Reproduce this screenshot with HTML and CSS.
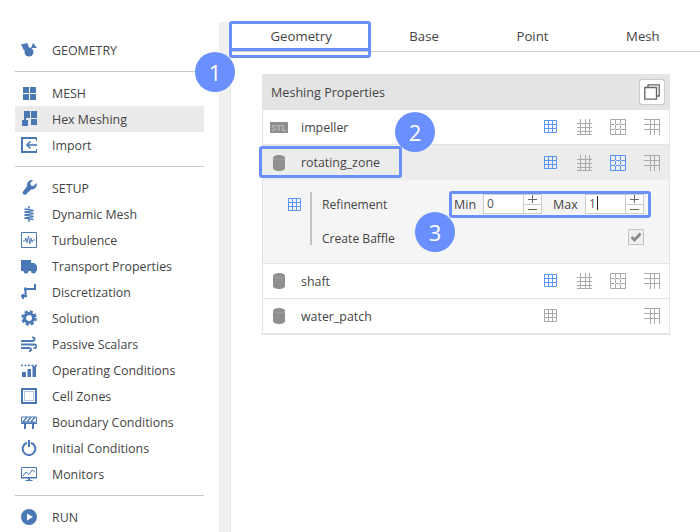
FILE: index.html
```html
<!DOCTYPE html>
<html lang="en">
<head>
  <meta charset="UTF-8">
  <title>Hex Meshing</title>
  <link rel="stylesheet" href="styles.css">
</head>
<body>
  <svg class="sprite" xmlns="http://www.w3.org/2000/svg">
    <symbol id="grid-a" viewBox="0 0 16 16"><path d="M2.5 1.5h12v12h-12zM2 5.5h13M2 9.5h13M6.5 1v13M10.5 1v13" fill="none" stroke="currentColor"/></symbol>
    <symbol id="grid-b" viewBox="0 0 16 16"><path d="M4.5 0v16M9.5 0v16M13.5 0v16M1 4.5h15M1 8.5h15M1 12.5h15M1 15.5h15" fill="none" stroke="currentColor"/></symbol>
    <symbol id="grid-c" viewBox="0 0 16 16"><path d="M.5.5h15v15H.5z" fill="none" stroke="currentColor"/><path d="M1 5.5h14M1 10.5h14M5.5 1v14M10.5 1v14" fill="none" stroke="currentColor" stroke-dasharray="4 1"/></symbol>
    <symbol id="grid-d" viewBox="0 0 16 16"><path d="M0 .5h16M0 5.5h16M0 10.5h16M15.5 0v16M10.5 0v16M6.5 0v16" fill="none" stroke="currentColor"/></symbol>
    <symbol id="cylinder" viewBox="0 0 12 16"><path d="M0 3c0-4 12-4 12 0v10c0 4-12 4-12 0z" fill="#8f8f8f"/><path d="M0 3.2c2 2.4 10 2.4 12 0" fill="none" stroke="#a5a5a5"/></symbol>
    <symbol id="plus" viewBox="0 0 9 8"><path d="M0 4.500h9M4.500 0v8" fill="none" stroke="currentColor"/></symbol>
    <symbol id="minus" viewBox="0 0 9 8"><path d="M0 4.500h9" fill="none" stroke="currentColor"/></symbol>
  </svg>

  <div class="page">
    <nav class="sidebar">
      <a class="nav-item">
        <svg class="nav-icon" viewBox="0 0 16 16"><path d="M0 2.500L6.500 1 8 6 3 8.500z"/><circle cx="8" cy="10" r="4.500"/><path d="M12 1l4 5h-6z"/></svg>
        GEOMETRY
      </a>
      <hr>
      <a class="nav-item">
        <svg class="nav-icon" viewBox="0 0 16 16"><path d="M2 2h6v6H2zM9 2h6v6H9zM2 9h6v6H2zM9 9h6v6H9z"/></svg>
        MESH
      </a>
      <a class="nav-item active">
        <svg class="nav-icon" viewBox="0 0 16 16"><path d="M3 0h6v7H5v2H3zM10 0h6v7h-6zM10 8h6v6h-6zM1 9h6v6H1z"/></svg>
        Hex Meshing
      </a>
      <a class="nav-item">
        <svg class="nav-icon" viewBox="0 0 16 16"><path d="M16 4V1H1v14h15v-3" fill="none" stroke-width="2"/><path d="M16 8H7" fill="none" stroke-width="1.600"/><path d="M9.500 4.500L6 8l3.500 3.500" fill="none" stroke-width="1.600"/></svg>
        Import
      </a>
      <hr>
      <a class="nav-item">
        <svg class="nav-icon" viewBox="0 0 16 16"><path d="M15.500 3l-3 3-2.500-.500-.800-2.500 3-3a5 5 0 0 0-6 6L2 11.500A2.200 2.200 0 0 0 5 14.500l5-5a5 5 0 0 0 5.500-6.500z"/></svg>
        SETUP
      </a>
      <a class="nav-item">
        <svg class="nav-icon" viewBox="0 0 16 16"><path d="M8 0v2.500M3.500 3l9 1.500L3.500 6l9 1.500L3.500 9l9 1.500L3.500 12l9 1.500M8 13.500V16" fill="none" stroke-width="1.500"/></svg>
        Dynamic Mesh
      </a>
      <a class="nav-item">
        <svg class="nav-icon" viewBox="0 0 16 16"><path d="M.5.5h15v15H.5z" fill="none"/><path d="M2 9h2l1-3 1 5 1.500-7L9 12l1-6 1 4 1-2h2" fill="none" stroke-width=".9"/></svg>
        Turbulence
      </a>
      <a class="nav-item">
        <svg class="nav-icon" viewBox="0 0 16 16"><path d="M0 2h10v3h3.500L16 8v5H0z"/><circle class="wheel" cx="5" cy="13" r="2.500"/><circle class="wheel" cx="12.500" cy="13" r="2.500"/></svg>
        Transport Properties
      </a>
      <a class="nav-item">
        <svg class="nav-icon" viewBox="0 0 16 16"><path d="M0 12h4.500V5H14" fill="none" stroke-width="2"/><path d="M13 0h2v6h-2zM1 10h2v5H1z"/><circle cx="4.500" cy="5" r="1.700"/><circle cx="4.500" cy="12" r="1.500"/></svg>
        Discretization
      </a>
      <a class="nav-item">
        <svg class="nav-icon" viewBox="0 0 16 16"><circle cx="8" cy="8" r="4.500" fill="none" stroke-width="3"/><circle cx="8" cy="8" r="6.500" fill="none" stroke-width="2.500" stroke-dasharray="3 2.100"/></svg>
        Solution
      </a>
      <a class="nav-item">
        <svg class="nav-icon" viewBox="0 0 16 16"><path d="M0 5h11c3.500 0 3.500-4 0-3.500M0 8.500h13c3.500 0 3.500 4-.5 3.500M0 12h8c3 0 2.500 3.500 0 3" fill="none" stroke-width="1.800"/></svg>
        Passive Scalars
      </a>
      <a class="nav-item">
        <svg class="nav-icon" viewBox="0 0 16 16"><path d="M1 10h4v5H1zM6.500 7h3.500v8H6.500zM11.500 4H15v11h-3.500z"/><path d="M0 3.500h16" fill="none" stroke-width="1.500" stroke-dasharray="2 1.500"/></svg>
        Operating Conditions
      </a>
      <a class="nav-item">
        <svg class="nav-icon" viewBox="0 0 16 16"><path d="M1 1h14v14H1z" fill="none" stroke-width="2"/><path d="M3.500 3.500h9v9h-9z" fill="none" stroke-width=".8" stroke-dasharray="1 1"/></svg>
        Cell Zones
      </a>
      <a class="nav-item">
        <svg class="nav-icon" viewBox="0 0 16 16"><path d="M.500 3h15v5H.500z" fill="none"/><path d="M2 8l4-5M6 8l4-5M10 8l4-5" fill="none" stroke-width="1.300"/><path d="M3 8h2v7H3zM11 8h2v7h-2z"/><path d="M0 8.500h16v1.500H0z"/></svg>
        Boundary Conditions
      </a>
      <a class="nav-item">
        <svg class="nav-icon" viewBox="0 0 16 16"><path d="M6 2.800a6.300 6.300 0 1 0 4 0" fill="none" stroke-width="2"/><path d="M7 0h2v7H7z"/></svg>
        Initial Conditions
      </a>
      <a class="nav-item">
        <svg class="nav-icon" viewBox="0 0 16 16"><path d="M.5 1.500h15v10H.5z" fill="none"/><path d="M2 10l3-4 3 2.500L11 4l3 2" fill="none" stroke-width="1"/><path d="M0 11h16v1.500H0zM7 12h2v2H7zM4.500 14h7v1h-7z"/></svg>
        Monitors
      </a>
      <hr>
      <a class="nav-item">
        <svg class="nav-icon" viewBox="0 0 16 16"><path fill-rule="evenodd" d="M8 0a8 8 0 1 1 0 16A8 8 0 0 1 8 0zM6 4.500v7L12 8z"/></svg>
        RUN
      </a>
    </nav>

    <div class="strip"></div>

    <main class="content">
      <div class="tabs">
        <a class="tab active">Geometry</a>
        <a class="tab">Base</a>
        <a class="tab">Point</a>
        <a class="tab">Mesh</a>
      </div>

      <section class="panel">
        <header class="panel-head">
          <span>Meshing Properties</span>
          <button class="copy-btn" type="button">
            <svg width="16" height="16" viewBox="0 0 16 16"><path d="M4 3.500V.8h11.200V12h-2.700M.8 3.500h11.700V15.200H.8z" fill="none" stroke="#666" stroke-width="1.300"/></svg>
          </button>
        </header>

        <div class="row">
          <span class="row-type"><span class="stl">STL</span></span>
          <span class="row-name">impeller</span>
          <span class="cell"><svg class="on"><use href="#grid-a"/></svg></span>
          <span class="cell"><svg><use href="#grid-b"/></svg></span>
          <span class="cell"><svg><use href="#grid-c"/></svg></span>
          <span class="cell"><svg><use href="#grid-d"/></svg></span>
        </div>

        <div class="row open">
          <span class="row-type"><svg class="cyl"><use href="#cylinder"/></svg></span>
          <span class="row-name">rotating_zone</span>
          <span class="cell"><svg class="on"><use href="#grid-a"/></svg></span>
          <span class="cell"><svg><use href="#grid-b"/></svg></span>
          <span class="cell"><svg class="on"><use href="#grid-c"/></svg></span>
          <span class="cell"><svg><use href="#grid-d"/></svg></span>
        </div>

        <div class="detail">
          <svg class="detail-icon on"><use href="#grid-a"/></svg>
          <div class="detail-rows">
            <div class="detail-row">
              <span class="detail-label">Refinement</span>
              <span class="range-label min-label">Min</span>
              <span class="spin">
                <span class="spin-value">0</span>
                <span class="spin-btns">
                  <span class="spin-btn"><svg><use href="#plus"/></svg></span>
                  <span class="spin-btn"><svg><use href="#minus"/></svg></span>
                </span>
              </span>
              <span class="range-label max-label">Max</span>
              <span class="spin">
                <span class="spin-value">1<b class="caret"></b></span>
                <span class="spin-btns">
                  <span class="spin-btn"><svg><use href="#plus"/></svg></span>
                  <span class="spin-btn"><svg><use href="#minus"/></svg></span>
                </span>
              </span>
            </div>
            <div class="detail-row">
              <span class="detail-label">Create Baffle</span>
              <span class="check">
                <svg width="12" height="10" viewBox="0 0 12 10"><path d="M1.500 5l3 3 6-6.500" fill="none" stroke="#8a8a8a" stroke-width="2.600"/></svg>
              </span>
            </div>
          </div>
        </div>

        <div class="row">
          <span class="row-type"><svg class="cyl"><use href="#cylinder"/></svg></span>
          <span class="row-name">shaft</span>
          <span class="cell"><svg class="on"><use href="#grid-a"/></svg></span>
          <span class="cell"><svg><use href="#grid-b"/></svg></span>
          <span class="cell"><svg><use href="#grid-c"/></svg></span>
          <span class="cell"><svg><use href="#grid-d"/></svg></span>
        </div>

        <div class="row">
          <span class="row-type"><svg class="cyl"><use href="#cylinder"/></svg></span>
          <span class="row-name">water_patch</span>
          <span class="cell"><svg><use href="#grid-a"/></svg></span>
          <span class="cell"></span>
          <span class="cell"></span>
          <span class="cell"><svg><use href="#grid-d"/></svg></span>
        </div>
      </section>
    </main>

    <!-- tutorial callouts on top of the ui -->
    <div class="mark mark-tab"></div>
    <div class="mark mark-row"></div>
    <div class="mark mark-range"></div>
    <div class="bubble bubble-1">1</div>
    <div class="bubble bubble-2">2</div>
    <div class="bubble bubble-3">3</div>
  </div>
</body>
</html>
```

FILE: styles.css
```css
* { box-sizing: border-box; }
html, body { margin: 0; height: 100%; overflow: hidden; }
body { background: #fff; color: #444; font-family: "Open Sans", "Noto Sans", sans-serif; font-size: 12.400px; }
.sprite { display: none; }

.page { position: relative; display: flex; height: 532px; }

/* left nav */
.sidebar { width: 219px; flex: none; padding: 37px 15px 0; }
.sidebar hr { margin: 8px 0; height: 1px; border: 0; background: #c8c8c8; }
.nav-item { display: flex; align-items: center; gap: 15px; height: 26px; padding-left: 6px; }
.nav-item.active { background: #ebebeb; }
.nav-icon { width: 16px; height: 16px; flex: none; fill: #4a78b5; stroke: #4a78b5; stroke-width: 1; }
.nav-item .nav-icon path:not([fill="none"]), .nav-item .nav-icon circle:not([fill="none"]) { stroke: none; }
.nav-item .nav-icon .wheel { stroke: #fff; stroke-width: 1; }

.strip { width: 12px; flex: none; margin-top: 22px; background: #f0f0f0; border-right: 1px solid #e6e6e6; }

/* tabs */
.content { flex: 1; padding-top: 22px; }
.tabs { display: flex; height: 30px; border-bottom: 1px solid #ccc; font-size: 13.200px; }
.tab { padding: 0 38.800px; line-height: 29px; }
.tab:first-child { padding-left: 39.500px; }
.tab.active { border-bottom: 3px solid #6a8fff; height: 29px; }

/* panel */
.panel { width: 408px; margin: 22px 0 0 31px; border: 1px solid #e4e4e4; border-top: 0; }
.panel-head { display: flex; align-items: center; justify-content: space-between; height: 36px; margin: 0 -1px; padding: 0 5px 0 9px; background: #e4e4e4; font-size: 12.600px; }
.copy-btn { display: flex; align-items: center; justify-content: center; width: 26px; height: 26px; padding: 0; background: #fff; border: 1px solid #ccc; border-radius: 3px; }

.row { display: flex; align-items: center; height: 35px; border-bottom: 1px solid #e4e4e4; }
.row.open { background: #ececec; border-bottom: 0; }
.row-type { display: flex; justify-content: center; width: 38px; padding-right: 6px; flex: none; }
.row-name { flex: 1; }
.cell { display: flex; justify-content: center; width: 34px; flex: none; }
.cell svg, .detail-icon { width: 16px; height: 16px; color: #aaa; }
svg.on { color: #5b95f5; }
.cyl { width: 12px; height: 16px; }
.stl { width: 18px; height: 11px; background: #8f8f8f; color: #b5b5b5; font-size: 9px; font-weight: 700; line-height: 11px; text-align: center; }

/* expanded row */
.detail { display: flex; height: 84px; padding: 12px 0 0 23px; background: #f5f5f5; border-bottom: 1px solid #e4e4e4; font-size: 12.100px; }
.detail-icon { margin-top: 5px; flex: none; }
.detail-rows { width: 342px; height: 53px; margin-left: 8px; padding-left: 10px; border-left: 2px solid #c4c4c4; }
.detail-row { display: flex; align-items: center; height: 24px; }
.detail-row + .detail-row { margin-top: 13px; height: 16px; justify-content: space-between; padding-right: 8px; }
.detail-row + .detail-row .detail-label { padding-top: 2px; }
.detail-label { width: 132px; flex: none; }
.range-label { font-size: 12.500px; }
.min-label { width: 29px; flex: none; }
.max-label { width: 32px; flex: none; margin-left: 11px; }
.spin { display: flex; width: 59px; height: 20px; background: #fff; border: 1px solid #ccc; }
.spin-value { flex: 1; padding-left: 3px; line-height: 17px; color: #555; }
.caret { display: inline-block; width: 1px; height: 14px; margin-left: 1px; background: #222; vertical-align: -2px; }
.spin-btns { display: flex; flex-direction: column; width: 18px; border-left: 1px solid #ccc; }
.spin-btn { display: flex; flex: 1; align-items: center; justify-content: center; color: #666; }
.spin-btn + .spin-btn { border-top: 1px solid #ccc; }
.spin-btn svg { width: 9px; height: 8px; }
.check { display: flex; align-items: center; justify-content: center; width: 16px; height: 16px; background: #efefef; border: 1px solid #c4c4c4; }

/* callouts */
.mark { position: absolute; border: 3px solid #6a8fff; border-radius: 3px; }
.mark-tab { left: 229px; top: 21px; width: 142px; height: 37px; }
.mark-row { left: 259px; top: 146px; width: 143px; height: 32px; }
.mark-range { left: 449px; top: 191px; width: 202px; height: 27px; }
.bubble { position: absolute; width: 40px; height: 40px; border-radius: 50%; background: #6a8fff; color: #fff; font-size: 22px; line-height: 40px; text-align: center; }
.bubble-1 { left: 195px; top: 52px; }
.bubble-2 { left: 395px; top: 112px; }
.bubble-3 { left: 415px; top: 212px; }
```
